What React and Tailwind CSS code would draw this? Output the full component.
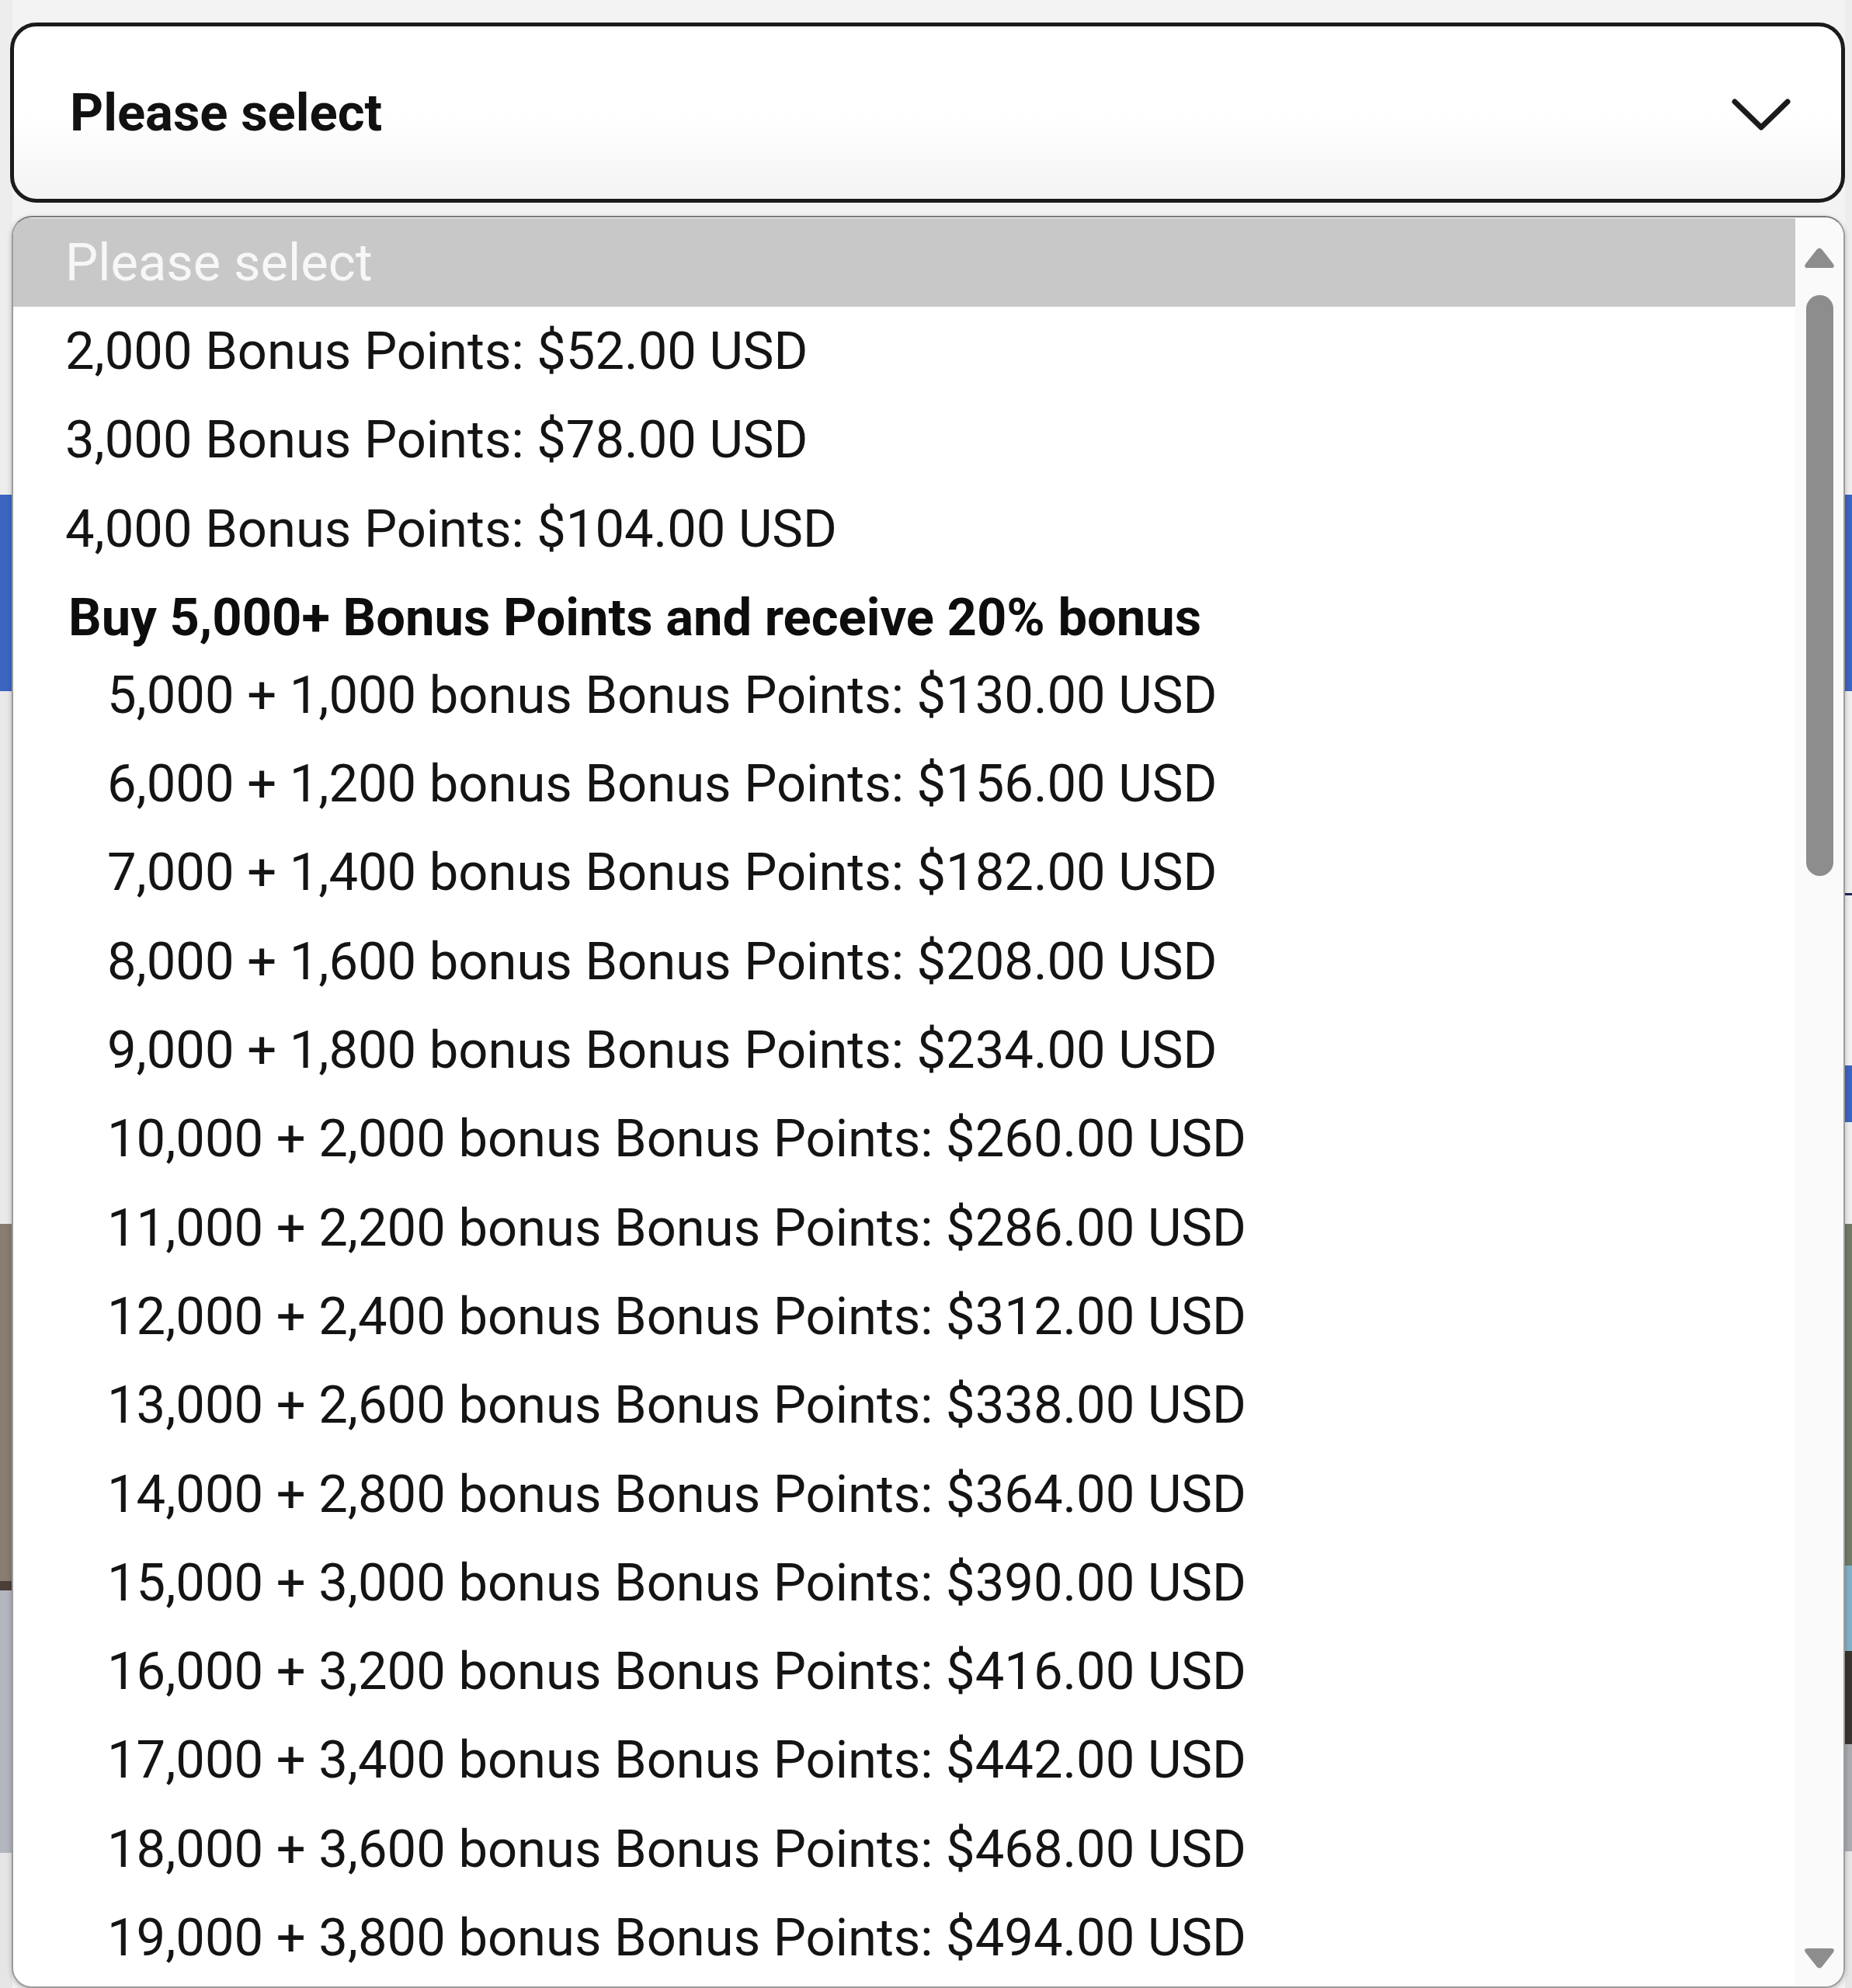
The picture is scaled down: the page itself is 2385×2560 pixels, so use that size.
import React from "react";

const fmt = (n) => n.toLocaleString("en-US");

const topOptions = [
  "2,000 Bonus Points: $52.00 USD",
  "3,000 Bonus Points: $78.00 USD",
  "4,000 Bonus Points: $104.00 USD",
];

const groupOptions = Array.from({ length: 15 }, (_, i) => {
  const n = i + 5;
  return `${fmt(n * 1000)} + ${fmt(n * 200)} bonus Bonus Points: $${fmt(n * 26)}.00 USD`;
});

function Background() {
  return (
    <div className="col-start-1 row-start-1 flex h-[2560px] w-full bg-[#f3f3f3]">
      <div className="flex w-[16px] flex-col">
        <div className="h-[637px] bg-[#ededed]" />
        <div className="h-[253px] bg-[#3b65c0]" />
        <div className="h-[686px] bg-[#e9e9e9]" />
        <div className="h-[460px] bg-[#877d70]" />
        <div className="h-[12px] bg-[#4a4038]" />
        <div className="h-[338px] bg-[#b4b6bf]" />
        <div className="flex-1 bg-[#e6e6e6]" />
      </div>
      <div className="flex-1" />
      <div className="flex w-[9px] flex-col">
        <div className="h-[637px] bg-[#ededed]" />
        <div className="h-[253px] bg-[#3b65c0]" />
        <div className="h-[260px] bg-[#eeeeee]" />
        <div className="h-[3px] bg-[#1f2a55]" />
        <div className="h-[219px] bg-[#f1f1f1]" />
        <div className="h-[73px] bg-[#3b65c0]" />
        <div className="h-[131px] bg-[#eeeeee]" />
        <div className="h-[440px] bg-[#6f7a67]" />
        <div className="h-[110px] bg-[#7fb2c9]" />
        <div className="h-[120px] bg-[#3a342e]" />
        <div className="h-[138px] bg-[#a9abb0]" />
        <div className="flex-1 bg-[#e6e6e6]" />
      </div>
    </div>
  );
}

function Row({ children, className = "" }) {
  return (
    <div className={`flex h-[114.3px] items-center whitespace-nowrap ${className}`}>
      {children}
    </div>
  );
}

export default function App() {
  return (
    <div
      className="grid w-[2385px] h-[2560px] overflow-hidden"
      style={{ fontFamily: "Roboto, 'Liberation Sans', sans-serif" }}
    >
      <Background />
      <div className="col-start-1 row-start-1 flex flex-col pl-[13px] pr-[9px] pt-[29px]">
        {/* Select box */}
        <div className="flex h-[232px] items-center justify-between rounded-[34px] border-[5px] border-[#1b1b1b] bg-linear-to-b from-white via-white to-[#f4f4f4] pl-[72px] pr-[64px]">
          <span className="text-[67px] font-bold leading-none text-[#111]">Please select</span>
          <svg width="78" height="52" viewBox="0 0 78 52" fill="none" className="mt-[6px]">
            <polyline
              points="5,9 39,42 73,9"
              stroke="#1b1b1b"
              strokeWidth="7"
              strokeLinecap="round"
              strokeLinejoin="round"
            />
          </svg>
        </div>

        {/* Dropdown popup */}
        <div className="ml-[2px] mt-[17px] flex h-[2282px] overflow-hidden rounded-[26px] border-2 border-[#9c9c9c] border-t-[#7a7a7a] bg-white shadow-[0_2px_6px_rgba(0,0,0,0.25)]">
          <div className="flex flex-1 flex-col pt-[1px] text-[66.9px] leading-none text-[#141414]">
            <Row className="bg-[#c8c8c8] pl-[67px] text-[#f7f7f7]">Please select</Row>
            {topOptions.map((t) => (
              <Row key={t} className="pl-[67px]">
                {t}
              </Row>
            ))}
            <div className="flex h-[100px] items-center whitespace-nowrap pl-[71px] pt-[14px] font-bold text-[#0d0d0d]">
              Buy 5,000+ Bonus Points and receive 20% bonus
            </div>
            {groupOptions.map((t) => (
              <Row key={t} className="pl-[121px]">
                {t}
              </Row>
            ))}
          </div>

          {/* Scrollbar */}
          <div className="flex w-[62px] flex-col items-center bg-[#fafafa] pb-[22px] pt-[38px]">
            <svg width="42" height="29" viewBox="0 0 42 29">
              <path
                d="M17.5 3.5 Q21 -0.5 24.5 3.5 L39 22 Q41.5 27 36 27 L6 27 Q0.5 27 3 22 Z"
                fill="#8d8d8d"
              />
            </svg>
            <div className="mt-[33px] h-[748px] w-[35px] rounded-full bg-[#8d8d8d]" />
            <div className="flex-1" />
            <svg width="42" height="29" viewBox="0 0 42 29">
              <path
                d="M17.5 25.5 Q21 29.5 24.5 25.5 L39 7 Q41.5 2 36 2 L6 2 Q0.5 2 3 7 Z"
                fill="#8d8d8d"
              />
            </svg>
          </div>
        </div>
      </div>
    </div>
  );
}
